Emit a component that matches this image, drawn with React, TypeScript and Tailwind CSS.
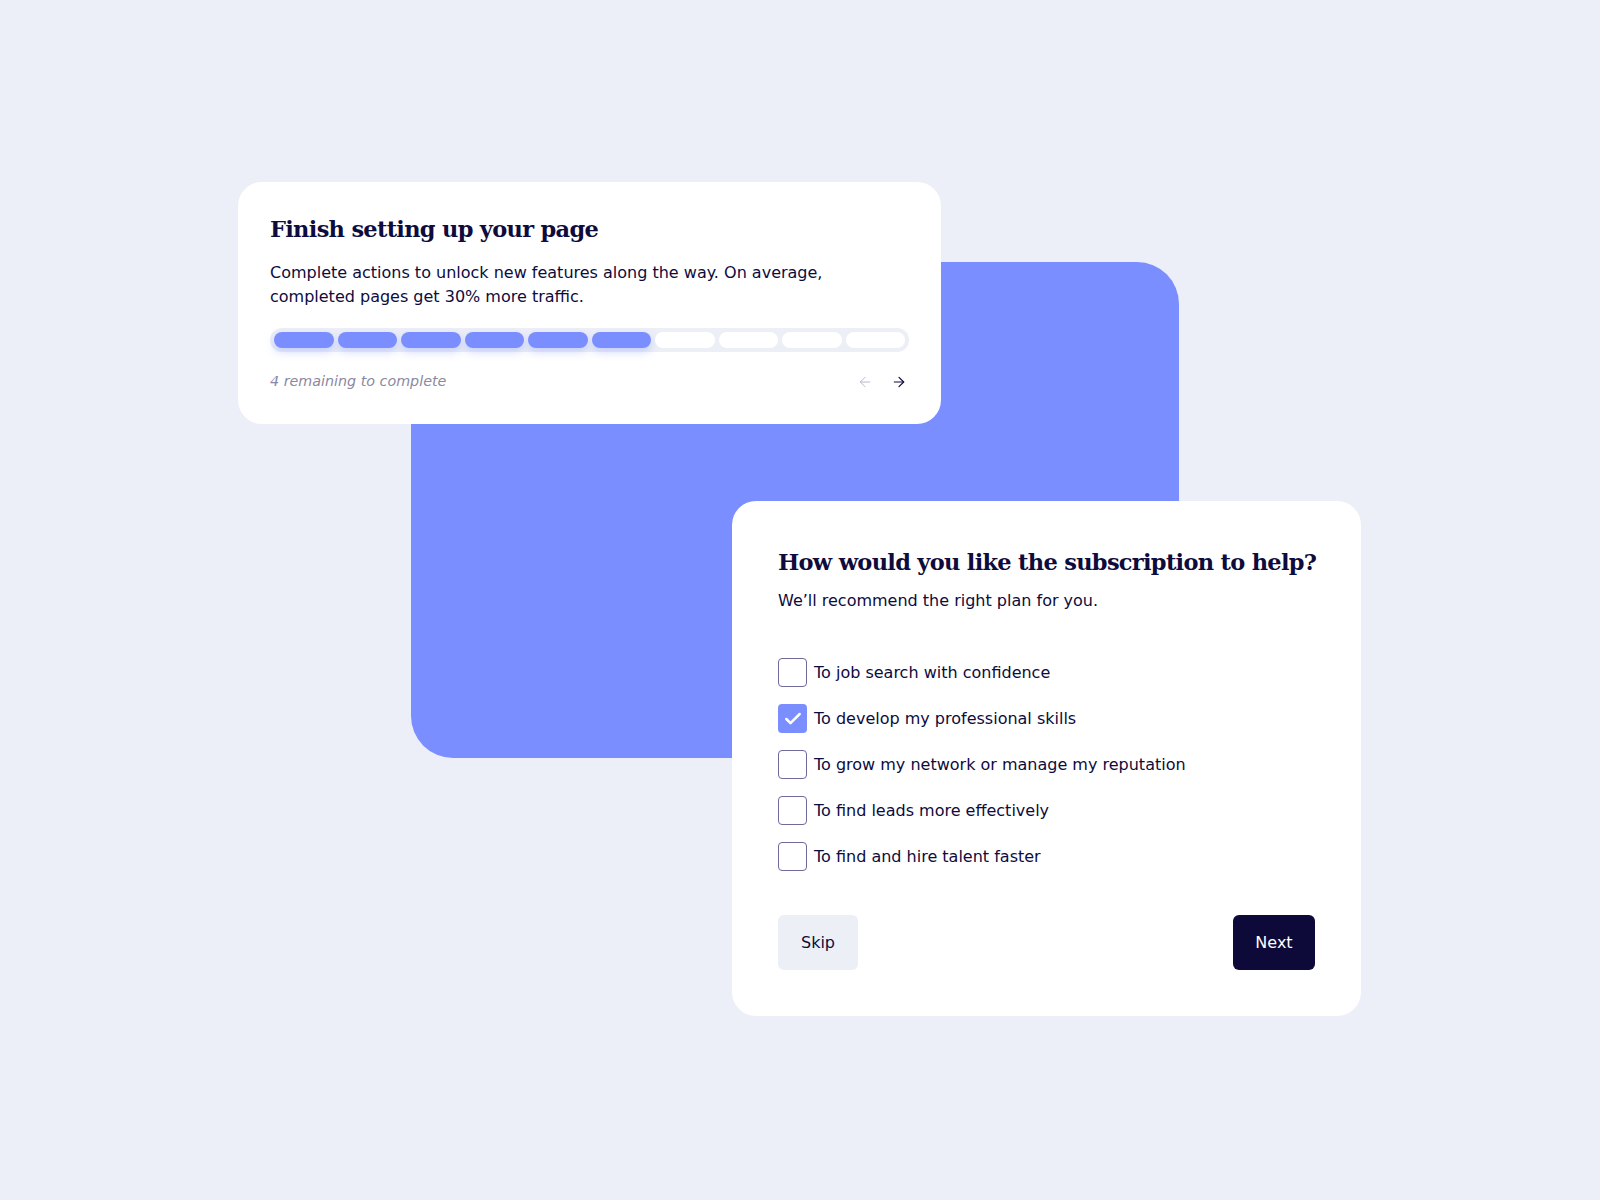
import { ArrowLeft, ArrowRight, Check } from "lucide-react";

// Two overlapping onboarding cards on a blue backdrop block.
// The pieces share one grid; each spans the tracks that match its edges.

const serif = "font-['DejaVu_Serif',serif]";
const sans = "font-['DejaVu_Sans',sans-serif]";

const OPTIONS = [
  { label: "To job search with confidence", checked: false },
  { label: "To develop my professional skills", checked: true },
  { label: "To grow my network or manage my reputation", checked: false },
  { label: "To find leads more effectively", checked: false },
  { label: "To find and hire talent faster", checked: false },
];

function ProgressCard() {
  const done = 6;
  return (
    <div className="z-10 col-start-2 col-end-5 row-start-2 row-end-4 flex flex-col rounded-[24px] bg-white px-8 pt-[31px]">
      <h2 className={`${serif} text-[22.5px] font-bold leading-[32px] tracking-[-0.7px] text-[#0e0b3d]`}>
        Finish setting up your page
      </h2>
      <p className={`${sans} mt-[16px] text-[16px] leading-[24px] text-[#0e0b3d]`}>
        Complete actions to unlock new features along the way. On average,
        <br />
        completed pages get 30% more traffic.
      </p>
      <div className="mt-[19px] flex gap-[4px] rounded-full bg-[#eceff6] p-[4px]">
        {Array.from({ length: 10 }).map((_, i) => (
          <div
            key={i}
            className={
              i < done
                ? "h-[16px] flex-1 rounded-full bg-[#7b8eff] shadow-[0_4px_8px_rgba(123,142,255,0.35)]"
                : "h-[16px] flex-1 rounded-full bg-white"
            }
          />
        ))}
      </div>
      <div className="mt-[19px] flex items-center justify-between">
        <span className={`${sans} text-[14.3px] italic text-[#8a88a3]`}>
          4 remaining to complete
        </span>
        <div className="flex items-center gap-[18px] pr-[2px]">
          <ArrowLeft className="h-4 w-4 text-[#b9b8cc]" strokeWidth={1.5} />
          <ArrowRight className="h-4 w-4 text-[#0e0b3d]" strokeWidth={1.8} />
        </div>
      </div>
    </div>
  );
}

function HelpCard() {
  return (
    <div className="z-10 col-start-4 col-end-7 row-start-5 row-end-7 flex flex-col rounded-[24px] bg-white px-[46px] pt-[44px] pb-[46px]">
      <h2 className={`${serif} whitespace-nowrap text-[22.5px] font-bold leading-[34px] tracking-[-0.7px] text-[#0e0b3d]`}>
        How would you like the subscription to help?
      </h2>
      <p className={`${sans} mt-[10px] text-[16px] leading-[24px] text-[#0e0b3d]`}>
        We’ll recommend the right plan for you.
      </p>
      <div className="mt-[45px] flex flex-col gap-[17px]">
        {OPTIONS.map((o) => (
          <label key={o.label} className="flex items-center gap-[7px]">
            {o.checked ? (
              <span className="flex h-[29px] w-[29px] items-center justify-center rounded-[4px] bg-[#7b8eff]">
                <Check className="h-[20px] w-[20px] text-white" strokeWidth={3} />
              </span>
            ) : (
              <span className="h-[29px] w-[29px] rounded-[4px] border border-[#6e6a99]" />
            )}
            <span className={`${sans} text-[16px] text-[#0e0b3d]`}>{o.label}</span>
          </label>
        ))}
      </div>
      <div className="mt-auto flex items-center justify-between">
        <button className={`${sans} h-[55px] w-[80px] rounded-[6px] bg-[#eceff6] text-[16px] text-[#0e0b3d]`}>
          Skip
        </button>
        <button className={`${sans} h-[55px] w-[82px] rounded-[6px] bg-[#0d0a3a] text-[16px] text-white`}>
          Next
        </button>
      </div>
    </div>
  );
}

export default function App() {
  return (
    <div className="min-h-[1200px] w-full bg-[#eceff7]">
      <div className="grid grid-cols-[238px_173px_321px_209px_238px_182px] grid-rows-[182px_80px_162px_77px_257px_258px]">
        <ProgressCard />
        <div className="col-start-3 col-end-6 row-start-3 row-end-6 rounded-[42px] bg-[#7b8eff]" />
        <HelpCard />
      </div>
    </div>
  );
}
